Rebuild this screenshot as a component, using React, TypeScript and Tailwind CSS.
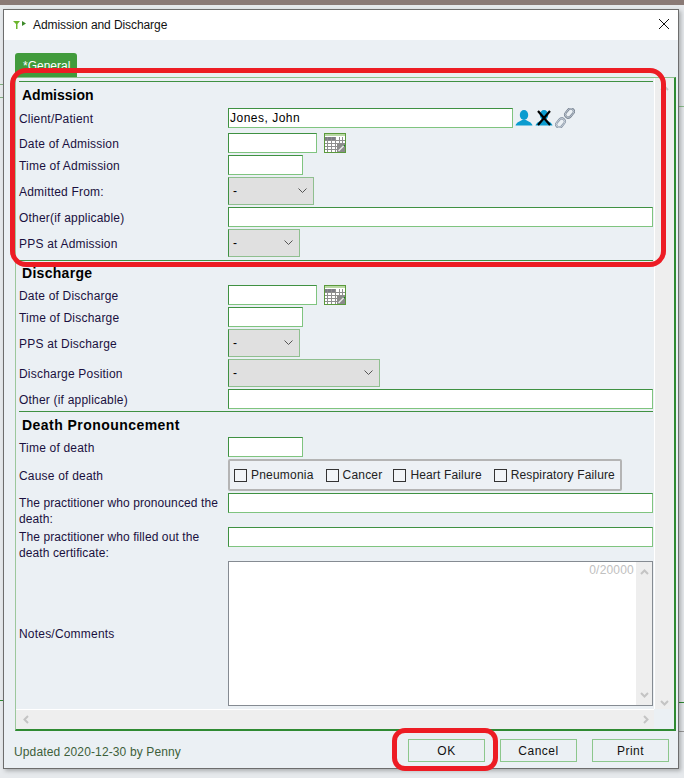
import React from "react"

const PersonIcon = () => (
  <svg width="18" height="16" viewBox="0 0 18 16">
    <ellipse cx="9" cy="5" rx="4.2" ry="5" fill="#0b9ccf" />
    <path d="M0.5 15.5 C1.5 12 5 11.5 7 10 H11 C13 11.5 16.5 12 17.5 15.5 Z" fill="#0b9ccf" />
  </svg>
)

const ChainIcon = () => (
  <svg width="20" height="20" viewBox="0 0 20 20" fill="none">
    <rect x="11.5" y="0" width="6" height="10" rx="3" transform="rotate(40 14.5 5)" stroke="#76818f" strokeWidth="2.2" />
    <rect x="11.5" y="0" width="6" height="10" rx="3" transform="rotate(40 14.5 5)" stroke="#d5dee8" strokeWidth="0.7" />
    <rect x="2.5" y="10" width="6" height="10" rx="3" transform="rotate(40 5.5 15)" stroke="#8794a4" strokeWidth="2.2" />
    <rect x="2.5" y="10" width="6" height="10" rx="3" transform="rotate(40 5.5 15)" stroke="#dfe6ee" strokeWidth="0.7" />
  </svg>
)

const CalendarIcon = () => (
  <svg width="22" height="20" viewBox="0 0 22 20">
    <rect x="0" y="0" width="22" height="20" fill="#5a9a3c" />
    <rect x="1" y="1" width="20" height="3" fill="#b9d8a4" />
    <rect x="1" y="3" width="20" height="16" fill="#fff" />
    <rect x="1" y="4" width="11" height="3" fill="#7d7d85" />
    <path d="M1 7.5H21M1 10.5H21M1 13.5H21M1 16.5H21M3.5 4V19M7.5 4V19M11.5 4V19M15.5 4V19M18.5 4V19" stroke="#8e8e8e" strokeWidth="1" />
    <rect x="13" y="11" width="8" height="8" fill="#8a8a8a" />
    <path d="M14.5 18 L20 12.5" stroke="#e8e8e8" strokeWidth="1.5" />
    <path d="M19 12 H21 V14 Z" fill="#1f7a2a" />
  </svg>
)

const Chevron = () => (
  <svg width="9" height="6" viewBox="0 0 9 6" fill="none" stroke="#555" strokeWidth="1">
    <path d="M0.5 0.5 L4.5 4.5 L8.5 0.5" />
  </svg>
)

const inputCls =
  "h-5 bg-white border border-t-[#3f9142] border-l-[#3f9142] border-r-[#7fc47f] border-b-[#7fc47f]"

function TextBox({ width, value }: { width: string; value?: string }) {
  return <div className={`${inputCls} ${width} pl-[1px] text-[12px] tracking-[0.5px] leading-[18px] text-black`}>{value}</div>
}

function SelectBox({ width }: { width: string }) {
  return (
    <div className={`h-7 ${width} flex items-center justify-between pl-1 pr-[6px] bg-[#e0e0e0] border border-t-[#8fbf8f] border-r-[#8fbf8f] border-b-[#8fbf8f] border-l-[#3f9142] text-black`}>
      <span>-</span>
      <Chevron />
    </div>
  )
}

function Row({ label, children, tall, labelCls = "pt-[2px]" }: { label: string; children: React.ReactNode; tall?: boolean; labelCls?: string }) {
  return (
    <div className={tall ? "flex items-start h-8" : "flex items-center"}>
      <div className={tall ? "w-[209px] pt-[2px] leading-4 tracking-[0.1px] text-[#1a1040]" : `w-[209px] text-[#1a1040] ${labelCls}`}>{label}</div>
      {children}
    </div>
  )
}

function Heading({ children, className }: { children: React.ReactNode; className: string }) {
  return <div className={`pl-[3px] flex items-center font-bold text-[14px] text-black ${className}`}>{children}</div>
}

function Check({ label, className }: { label: string; className: string }) {
  return (
    <div className={`flex items-center ${className}`}>
      <div className="w-[13px] h-[13px] border border-[#333] bg-[#f2f5f8]" />
      <span className="ml-1 text-[#222]">{label}</span>
    </div>
  )
}

export default function App() {
  return (
    <div className="relative w-[684px] h-[778px] overflow-hidden bg-[#e6e9ec] text-[12px] tracking-[0.2px] font-['Liberation_Sans',Arial,sans-serif]">
      <div className="h-[5px] bg-[#8a7a76]" />
      {/* bits of the window behind */}
      <div className="absolute left-0 top-[84px] w-[3px] h-[14px] border-t border-b border-[#7fb07f]" />
      <div className="absolute left-0 top-[700px] w-[3px] h-px bg-[#2f8a32]" />
      <div className="absolute right-0 top-[106px] w-[5px] h-px bg-[#8cc08c]" />
      <div className="absolute right-0 top-[702px] w-[5px] h-px bg-[#2f8a32]" />
      <div className="absolute right-0 top-[731px] w-[5px] h-px bg-[#999]" />

      <div className="relative ml-[3px] mt-1 w-[676px] h-[760px] flex flex-col border border-[#6d6d6d] bg-[#ebf0f4] shadow-[2px_2px_4px_rgba(0,0,0,0.25)]">
        {/* title bar */}
        <div className="h-[30px] bg-white flex items-center justify-between pl-[9px] pr-[8px] shrink-0">
          <div className="flex items-center">
            <svg width="14" height="10" viewBox="0 0 14 10">
              <path d="M0 1 H7 L4.5 4 V9 H3 V4 Z" fill="#6cb52d" />
              <path d="M9 1 L13 3.5 L9 6 Z" fill="#3d8a2a" />
            </svg>
            <span className="ml-[6px] text-[#111] tracking-[-0.08px]">Admission and Discharge</span>
          </div>
          <svg width="12" height="12" viewBox="0 0 12 12" stroke="#111" strokeWidth="1" className="mt-[-3px]">
            <path d="M1 1 L11 11 M11 1 L1 11" />
          </svg>
        </div>

        <div className="flex-1 flex flex-col pl-[11px] pr-[2px] pt-[13px]">
          {/* tab */}
          <div className="flex h-6 shrink-0">
            <div className="w-[62px] bg-[#419b3c] rounded-t-[3px] text-white pl-2 pt-[4px] tracking-normal">*General</div>
          </div>

          <div className="h-[654px] shrink-0 flex flex-col border-t border-t-[#8cc08c] border-l border-l-[#9cc79c] border-r-2 border-r-[#2f8a32] border-b-2 border-b-[#2f8a32]">
            <div className="flex-1 flex min-h-0">
              <div className="flex-1 pl-[3px] pt-[3px]">
                <div className="border-t border-[#3f9142] w-[634px]" />
                <Heading className="h-[26px] tracking-[0px]">Admission</Heading>
                <div className="flex flex-col gap-[2px] w-[634px]">
                  <Row label="Client/Patient">
                    <TextBox width="w-[285px]" value="Jones, John" />
                    <div className="ml-[2px] h-5 flex items-center gap-[2px]">
                      <PersonIcon />
                      <div className="relative">
                        <PersonIcon />
                        <svg width="18" height="16" viewBox="0 0 18 16" className="absolute left-0 top-0" stroke="#000" strokeWidth="2.2">
                          <path d="M3 1 L15 15 M15 1 L3 15" />
                        </svg>
                      </div>
                      <ChainIcon />
                    </div>
                  </Row>
                  <div className="mt-[3px]">
                    <Row label="Date of Admission">
                      <TextBox width="w-[89px]" />
                      <div className="ml-[7px] h-5"><CalendarIcon /></div>
                    </Row>
                  </div>
                  <Row label="Time of Admission"><TextBox width="w-[75px]" /></Row>
                  <Row label="Admitted From:"><SelectBox width="w-[86px]" /></Row>
                  <Row label="Other(if applicable)"><TextBox width="w-[425px]" /></Row>
                  <Row label="PPS at Admission"><SelectBox width="w-[72px]" /></Row>
                </div>
                <div className="mt-[3px] border-t border-[#3f9142] w-[634px]" />
                <Heading className="h-6 tracking-[0.3px]">Discharge</Heading>
                <div className="flex flex-col gap-[2px] w-[634px]">
                  <Row label="Date of Discharge">
                    <TextBox width="w-[89px]" />
                    <div className="ml-[7px] h-5"><CalendarIcon /></div>
                  </Row>
                  <Row label="Time of Discharge"><TextBox width="w-[75px]" /></Row>
                  <Row label="PPS at Discharge"><SelectBox width="w-[72px]" /></Row>
                  <Row label="Discharge Position"><SelectBox width="w-[152px]" /></Row>
                  <Row label="Other (if applicable)"><TextBox width="w-[425px]" /></Row>
                </div>
                <div className="mt-[2px] border-t border-[#3f9142] w-[634px]" />
                <Heading className="h-[25px] pt-[1px] tracking-[0.45px]">Death Pronouncement</Heading>
                <div className="flex flex-col gap-[2px] w-[634px]">
                  <Row label="Time of death"><TextBox width="w-[75px]" /></Row>
                  <Row label="Cause of death">
                    <div className="h-8 w-[394px] flex items-center border-2 border-[#b4b4b4] rounded-[2px] bg-[#edf1f5]">
                      <Check label="Pneumonia" className="ml-[4px]" />
                      <Check label="Cancer" className="ml-[12px]" />
                      <Check label="Heart Failure" className="ml-[11px] tracking-[0.15px]" />
                      <Check label="Respiratory Failure" className="ml-[12px] tracking-[0.15px]" />
                    </div>
                  </Row>
                  <Row tall label="The practitioner who pronounced the death:"><TextBox width="w-[425px]" /></Row>
                  <Row tall label="The practitioner who filled out the death certificate:"><TextBox width="w-[425px]" /></Row>
                  <Row label="Notes/Comments" labelCls="">
                    <div className="relative h-[145px] w-[425px] bg-white border border-[#858b92] flex justify-end">
                      <span className="absolute right-[18px] top-[-1px] text-[#c0c0c0]">0/20000</span>
                      <div className="w-[16px] bg-[#eeeeee] flex flex-col justify-between items-center py-[7px]">
                        <svg width="9" height="6" viewBox="0 0 9 6" fill="none" stroke="#c4c4c4" strokeWidth="2"><path d="M1 5 L4.5 1.5 L8 5" /></svg>
                        <svg width="9" height="6" viewBox="0 0 9 6" fill="none" stroke="#c4c4c4" strokeWidth="2"><path d="M1 1 L4.5 4.5 L8 1" /></svg>
                      </div>
                    </div>
                  </Row>
                </div>
              </div>
              {/* vertical scroll */}
              <div className="w-[20px] bg-[#eeeeee] border-l border-l-white flex flex-col justify-between items-center py-[7px] shrink-0">
                <svg width="9" height="6" viewBox="0 0 9 6" fill="none" stroke="#c4c4c4" strokeWidth="2"><path d="M1 5 L4.5 1.5 L8 5" /></svg>
                <svg width="9" height="6" viewBox="0 0 9 6" fill="none" stroke="#c4c4c4" strokeWidth="2" className="mb-[-4px]"><path d="M1 1 L4.5 4.5 L8 1" /></svg>
              </div>
            </div>
            {/* horizontal scroll */}
            <div className="h-[20px] mr-[20px] bg-[#eeeeee] border-t border-t-white flex justify-between items-center pl-[7px] pr-[5px] shrink-0">
              <svg width="6" height="9" viewBox="0 0 6 9" fill="none" stroke="#c4c4c4" strokeWidth="2"><path d="M5 1 L1.5 4.5 L5 8" /></svg>
              <svg width="6" height="9" viewBox="0 0 6 9" fill="none" stroke="#c4c4c4" strokeWidth="2"><path d="M1 1 L4.5 4.5 L1 8" /></svg>
            </div>
          </div>

          {/* footer */}
          <div className="flex items-start justify-between h-[37px] pt-2">
            <span className="mt-1 text-[#3d5f3a] ml-[-1px] tracking-[0.13px]">Updated 2020-12-30 by Penny</span>
            <div className="flex gap-[15px] mr-[7px]">
              {["OK", "Cancel", "Print"].map((b) => (
                <div key={b} className="w-[77px] h-[23px] flex items-center justify-center border border-[#8cc78c] text-[#111] tracking-[0.5px]">{b}</div>
              ))}
            </div>
          </div>
        </div>
      </div>

      {/* red annotations */}
      <div className="absolute left-[10px] top-[68px] w-[656px] h-[199px] border-[5px] border-[#ed1c24] rounded-[16px]" />
      <div className="absolute left-[392px] top-[728px] w-[106px] h-[43px] border-[5px] border-[#ed1c24] rounded-[13px]" />
    </div>
  )
}
